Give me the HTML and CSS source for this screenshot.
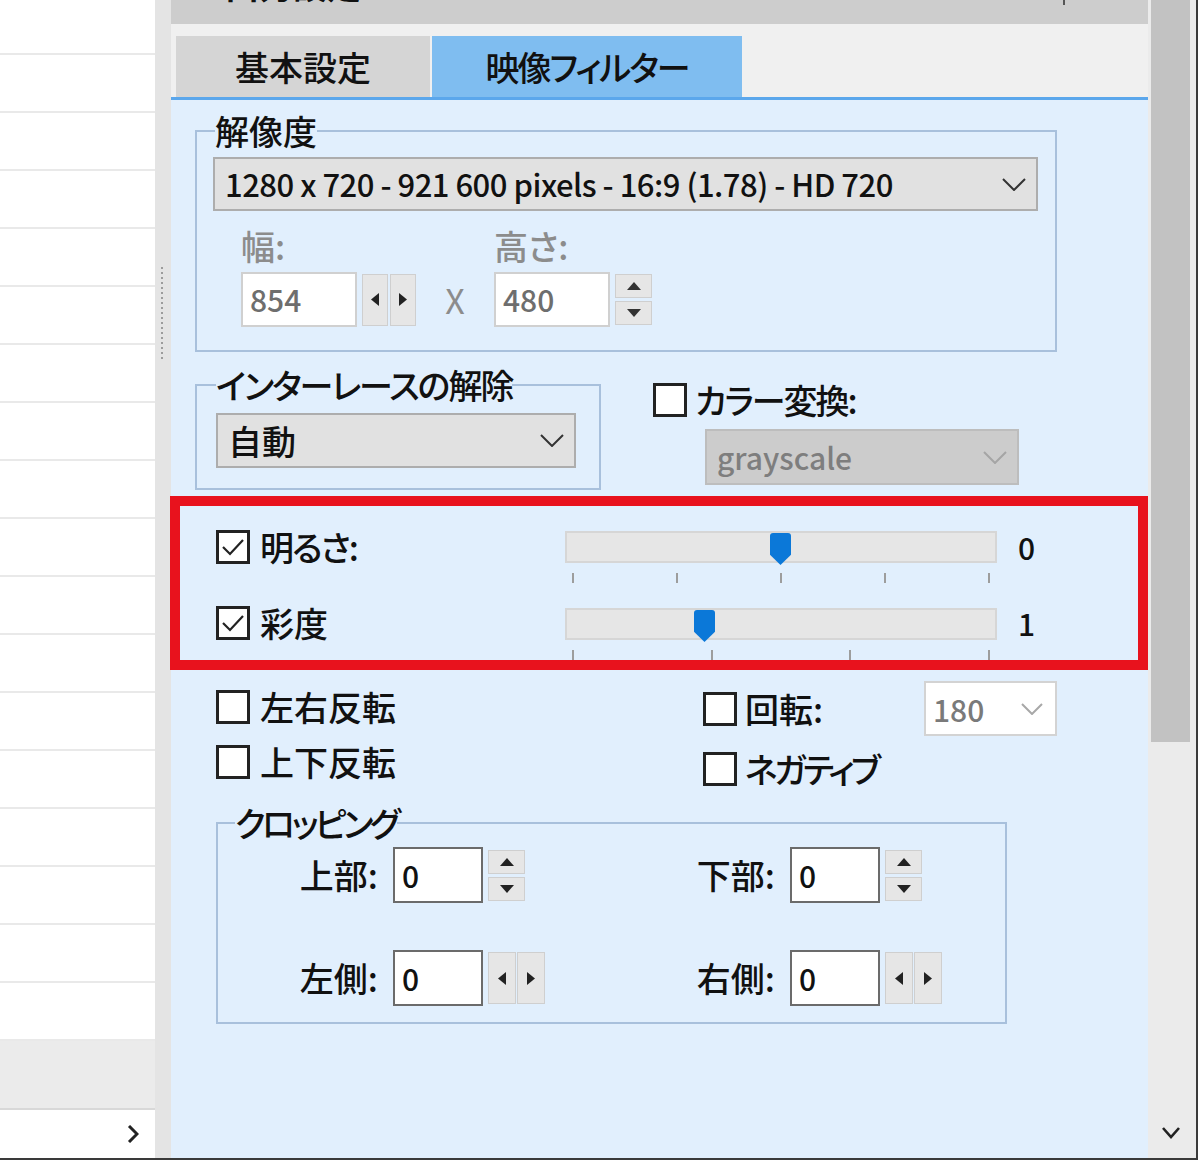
FILE: index.html
```html
<!DOCTYPE html>
<html lang="ja">
<head>
<meta charset="utf-8">
<title>映像フィルター</title>
<link rel="stylesheet" href="styles.css">
</head>
<body>
<div class="window">
  <aside class="list">
    <div class="list-row first"></div>
    <div class="list-row"></div><div class="list-row"></div><div class="list-row"></div>
    <div class="list-row"></div><div class="list-row"></div><div class="list-row"></div>
    <div class="list-row"></div><div class="list-row"></div><div class="list-row"></div>
    <div class="list-row"></div><div class="list-row"></div><div class="list-row"></div>
    <div class="list-row"></div><div class="list-row"></div><div class="list-row"></div>
    <div class="list-row"></div><div class="list-row"></div>
    <div class="list-gray"></div>
    <div class="list-foot">
      <svg width="12" height="18" viewBox="0 0 12 18"><polyline points="2,1 10,9 2,17" fill="none" stroke="#222" stroke-width="3"/></svg>
    </div>
  </aside>

  <div class="splitter"><div class="grip"></div></div>

  <main class="panel">
    <div class="panel-title"><span class="title-text">出力設定</span><span class="collapse"></span></div>
    <div class="tabs">
      <div class="tab basic">基本設定</div>
      <div class="tab video"><span class="kana">映像フィルター</span></div>
    </div>

    <div class="content">
      <fieldset class="group res">
        <legend>解像度</legend>
        <div class="select res-select">
          <span class="latin wide">1280 x 720 - 921 600 pixels - 16:9 (1.78) - HD 720</span>
          <svg class="chev" width="24" height="13" viewBox="0 0 24 13"><polyline points="1,1 12,12 23,1" fill="none" stroke="#333" stroke-width="2"/></svg>
        </div>
        <div class="dims">
          <div class="dim">
            <div class="dim-label">幅:</div>
            <div class="dim-inputs">
              <div class="field light latin">854</div>
              <div class="hspin">
                <div class="sbtn"><svg width="8" height="13" viewBox="0 0 8 13"><polygon points="8,0 8,13 0,6.5" fill="#222"/></svg></div>
                <div class="sbtn"><svg width="8" height="13" viewBox="0 0 8 13"><polygon points="0,0 0,13 8,6.5" fill="#222"/></svg></div>
              </div>
            </div>
          </div>
          <div class="times">X</div>
          <div class="dim">
            <div class="dim-label">高さ:</div>
            <div class="dim-inputs">
              <div class="field light latin">480</div>
              <div class="vspin">
                <div class="sbtn"><svg width="14" height="8" viewBox="0 0 14 8"><polygon points="0,8 14,8 7,0" fill="#333"/></svg></div>
                <div class="sbtn"><svg width="14" height="8" viewBox="0 0 14 8"><polygon points="0,0 14,0 7,8" fill="#333"/></svg></div>
              </div>
            </div>
          </div>
        </div>
      </fieldset>

      <div class="row2">
        <fieldset class="group deint">
          <legend class="kana">インターレースの解除</legend>
          <div class="select deint-select">
            <span>自動</span>
            <svg class="chev" width="24" height="13" viewBox="0 0 24 13"><polyline points="1,1 12,12 23,1" fill="none" stroke="#333" stroke-width="2"/></svg>
          </div>
        </fieldset>
        <div class="color">
          <div class="check"><span class="box"></span><span class="kana">カラー変換:</span></div>
          <div class="select disabled">
            <span class="latin">grayscale</span>
            <svg class="chev" width="24" height="13" viewBox="0 0 24 13"><polyline points="1,1 12,12 23,1" fill="none" stroke="#a5a5a5" stroke-width="2"/></svg>
          </div>
        </div>
      </div>

      <div class="redbox">
        <div class="srow">
          <div class="check"><span class="box"><svg width="28" height="28" viewBox="0 0 28 28"><polyline points="4,14 11,21 24,7" fill="none" stroke="#222" stroke-width="2.2"/></svg></span><span class="kana">明るさ:</span></div>
          <div class="slider">
            <div class="track"><span class="thumb" style="left:203px"></span></div>
            <div class="ticks"><i></i><i></i><i></i><i></i><i></i></div>
          </div>
          <div class="val latin">0</div>
        </div>
        <div class="srow second">
          <div class="check"><span class="box"><svg width="28" height="28" viewBox="0 0 28 28"><polyline points="4,14 11,21 24,7" fill="none" stroke="#222" stroke-width="2.2"/></svg></span><span>彩度</span></div>
          <div class="slider">
            <div class="track"><span class="thumb" style="left:127px"></span></div>
            <div class="ticks"><i></i><i></i><i></i><i></i></div>
          </div>
          <div class="val latin">1</div>
        </div>
      </div>

      <div class="opts">
        <div class="opts-left">
          <div class="check"><span class="box"></span><span>左右反転</span></div>
          <div class="check"><span class="box"></span><span>上下反転</span></div>
        </div>
        <div class="opts-right">
          <div class="rot">
            <div class="check"><span class="box"></span><span>回転:</span></div>
            <div class="select white">
              <span class="latin">180</span>
              <svg class="chev" width="22" height="12" viewBox="0 0 22 12"><polyline points="1,1 11,11 21,1" fill="none" stroke="#a8a8a8" stroke-width="2"/></svg>
            </div>
          </div>
          <div class="check"><span class="box"></span><span class="kana tight">ネガティブ</span></div>
        </div>
      </div>

      <fieldset class="group crop">
        <legend class="kana tight">クロッピング</legend>
        <div class="crop-grid">
          <div class="cell">
            <div class="cell-label">上部:</div>
            <div class="field dark latin">0</div>
            <div class="vspin">
              <div class="sbtn"><svg width="14" height="8" viewBox="0 0 14 8"><polygon points="0,8 14,8 7,0" fill="#222"/></svg></div>
              <div class="sbtn"><svg width="14" height="8" viewBox="0 0 14 8"><polygon points="0,0 14,0 7,8" fill="#222"/></svg></div>
            </div>
          </div>
          <div class="cell">
            <div class="cell-label">下部:</div>
            <div class="field dark latin">0</div>
            <div class="vspin">
              <div class="sbtn"><svg width="14" height="8" viewBox="0 0 14 8"><polygon points="0,8 14,8 7,0" fill="#222"/></svg></div>
              <div class="sbtn"><svg width="14" height="8" viewBox="0 0 14 8"><polygon points="0,0 14,0 7,8" fill="#222"/></svg></div>
            </div>
          </div>
          <div class="cell">
            <div class="cell-label">左側:</div>
            <div class="field dark latin">0</div>
            <div class="hspin wide">
              <div class="sbtn"><svg width="8" height="13" viewBox="0 0 8 13"><polygon points="8,0 8,13 0,6.5" fill="#222"/></svg></div>
              <div class="sbtn"><svg width="8" height="13" viewBox="0 0 8 13"><polygon points="0,0 0,13 8,6.5" fill="#222"/></svg></div>
            </div>
          </div>
          <div class="cell">
            <div class="cell-label">右側:</div>
            <div class="field dark latin">0</div>
            <div class="hspin wide">
              <div class="sbtn"><svg width="8" height="13" viewBox="0 0 8 13"><polygon points="8,0 8,13 0,6.5" fill="#222"/></svg></div>
              <div class="sbtn"><svg width="8" height="13" viewBox="0 0 8 13"><polygon points="0,0 0,13 8,6.5" fill="#222"/></svg></div>
            </div>
          </div>
        </div>
      </fieldset>
    </div>
  </main>

  <div class="vscroll">
    <div class="vthumb"></div>
    <div class="varrow">
      <svg width="18" height="12" viewBox="0 0 18 12"><polyline points="1,1 9,10 17,1" fill="none" stroke="#222" stroke-width="2.6"/></svg>
    </div>
  </div>
</div>
</body>
</html>
```

FILE: styles.css
```css
* { box-sizing: border-box; }

html, body {
  margin: 0;
  padding: 0;
  background: #ffffff;
}

body {
  font-family: "Noto Sans CJK JP", "Noto Sans", sans-serif;
  font-size: 34px;
  font-weight: 500;
  line-height: 40px;
  color: #111111;
  font-feature-settings: "palt";
}

.latin { font-size: 30px; }
.latin.wide { font-size: 31px; letter-spacing: -0.5px; }
.kana { letter-spacing: -2px; }
.kana.tight { letter-spacing: -3.5px; }

.window {
  display: flex;
  width: 1198px;
  height: 1160px;
  border-right: 2px solid #3a3a3a;
  border-bottom: 2px solid #3a3a3a;
  overflow: hidden;
}

/* left list */
.list {
  width: 155px;
  flex: none;
  display: flex;
  flex-direction: column;
  background: #ffffff;
}
.list-row {
  flex: none;
  height: 58px;
  border-bottom: 2px solid #e9e9e9;
}
.list-row.first { height: 55px; }
.list-gray {
  flex: none;
  height: 69px;
  background: #ebebeb;
  border-bottom: 2px solid #d8d8d8;
}
.list-foot {
  flex: 1;
  display: flex;
  align-items: center;
  justify-content: flex-end;
  padding-right: 16px;
}

/* splitter */
.splitter {
  width: 16px;
  flex: none;
  background: #e4e4e4;
  padding-top: 267px;
  padding-left: 6px;
}
.grip {
  width: 2px;
  height: 94px;
  background: repeating-linear-gradient(to bottom, #9c9c9c 0 2px, transparent 2px 5px);
}

/* main panel */
.panel {
  width: 977px;
  flex: none;
  display: flex;
  flex-direction: column;
}
.panel-title {
  height: 24px;
  background: #cdcdcd;
  overflow: hidden;
  display: flex;
  align-items: flex-start;
  padding-left: 54px;
}
.title-text {
  display: block;
  margin-top: -32px;
  line-height: 34px;
  font-weight: 700;
}
.collapse {
  margin-left: auto;
  margin-right: 83px;
  width: 2px;
  height: 5px;
  background: #555;
}

.tabs {
  height: 76px;
  background: #f0f0f0;
  border-bottom: 3px solid #5ba7ec;
  display: flex;
  align-items: flex-end;
  padding-left: 5px;
  gap: 2px;
}
.tab {
  height: 61px;
  line-height: 61px;
  text-align: center;
}
.tab.basic {
  width: 254px;
  background: #d5d5d5;
}
.tab.video {
  width: 310px;
  background: #7fbdf0;
}

.content {
  flex: 1;
  background: #e1effd;
  padding-left: 24px;
  display: flex;
  flex-direction: column;
  align-items: flex-start;
}

/* group boxes */
.group {
  margin: 0;
  min-width: 0;
  border: 2px solid #a8c0dc;
}
.group legend {
  padding: 0;
  line-height: 40px;
}

.res {
  margin-top: 11px;
  width: 862px;
  padding: 6px 17px 23px 16px;
}
.res legend { margin-left: 2px; }

.select {
  display: flex;
  align-items: center;
  justify-content: space-between;
  background: #e1e1e1;
  border: 2px solid #adadad;
  padding: 0 10px 0 10px;
}
.res-select {
  width: 825px;
  height: 54px;
}

.dims {
  display: flex;
  align-items: flex-end;
  margin-top: 15px;
  padding-left: 28px;
}
.dim {
  display: flex;
  flex-direction: column;
}
.dim-label {
  color: #8c8c8c;
  line-height: 40px;
}
.dim-inputs {
  display: flex;
  align-items: center;
  margin-top: 6px;
}
.field {
  background: #ffffff;
  padding-left: 7px;
}
.field.light {
  width: 116px;
  height: 55px;
  line-height: 51px;
  border: 2px solid #d0d0d0;
  color: #6e6e6e;
}
.times {
  width: 78px;
  height: 55px;
  line-height: 55px;
  text-align: center;
  color: #8c8c8c;
  font-weight: 400;
}

.sbtn {
  background: #e6e6e6;
  border: 1px solid #cfcfcf;
  display: flex;
  align-items: center;
  justify-content: center;
}
.hspin {
  display: flex;
  gap: 2px;
  margin-left: 5px;
}
.hspin .sbtn {
  width: 26px;
  height: 52px;
}
.hspin.wide { gap: 1px; }
.hspin.wide .sbtn {
  width: 28px;
  height: 52px;
}
.vspin {
  display: flex;
  flex-direction: column;
  gap: 3px;
  margin-left: 5px;
}
.vspin .sbtn {
  width: 37px;
  height: 24px;
}

/* row 2 */
.row2 {
  display: flex;
  margin-top: 13px;
}
.deint {
  width: 406px;
  padding: 8px 23px 20px 19px;
}
.deint-select {
  width: 360px;
  height: 55px;
}
.color {
  margin-left: 52px;
  padding-top: 15px;
}

.check {
  display: flex;
  align-items: center;
  gap: 8px;
  height: 40px;
}
.box {
  width: 34px;
  height: 34px;
  flex: none;
  border: 3px solid #222222;
  background: #ffffff;
  display: flex;
  align-items: center;
  justify-content: center;
}

.select.disabled {
  margin-top: 9px;
  margin-left: 52px;
  width: 314px;
  height: 56px;
  background: #cccccc;
  border-color: #bdbdbd;
  color: #7e7e7e;
}

/* red highlight */
.redbox {
  margin-top: 6px;
  margin-left: -25px;
  width: 978px;
  height: 174px;
  border: 10px solid #e8121d;
  padding: 24px 0 0 36px;
}
.srow {
  display: flex;
  align-items: flex-start;
}
.srow.second { margin-top: 23px; }
.srow .check {
  width: 349px;
  height: 34px;
  gap: 10px;
}
.slider { width: 432px; }
.track {
  position: relative;
  height: 32px;
  margin-top: 1px;
  background: #e6e6e6;
  border: 2px solid #d6d6d6;
}
.srow.second .track { margin-top: 2px; }
.thumb {
  position: absolute;
  top: 0;
  width: 21px;
  height: 32px;
  background: #0b78d8;
  border-radius: 3px 3px 0 0;
  clip-path: polygon(0 0, 100% 0, 100% 68%, 50% 100%, 0 68%);
}
.ticks {
  display: flex;
  justify-content: space-between;
  padding: 0 7px;
  margin-top: 10px;
  height: 10px;
}
.ticks i {
  width: 2px;
  height: 10px;
  background: #9d9d9d;
}
.val {
  margin-left: 21px;
  margin-top: 1px;
  line-height: 32px;
}

/* options */
.opts {
  display: flex;
  margin-top: 11px;
  margin-left: 21px;
}
.opts .check {
  height: 44px;
  gap: 10px;
}
.opts-left {
  width: 487px;
  padding-top: 4px;
  display: flex;
  flex-direction: column;
  gap: 11px;
}
.opts-right {
  display: flex;
  flex-direction: column;
  gap: 11px;
}
.rot {
  display: flex;
  align-items: center;
  height: 55px;
}
.rot .check {
  width: 221px;
  gap: 8px;
}
.opts-right > .check { gap: 8px; }
.select.white {
  width: 133px;
  height: 55px;
  background: #ffffff;
  border: 2px solid #d3d3d3;
  color: #7a7a7a;
  padding: 0 12px 0 7px;
}

/* cropping */
.crop {
  margin-top: 12px;
  margin-left: 21px;
  width: 791px;
  padding: 4px 0 16px 17px;
}
.crop-grid {
  display: grid;
  grid-template-columns: 397px 1fr;
  row-gap: 47px;
}
.cell {
  display: flex;
  align-items: center;
}
.cell-label {
  width: 143px;
  text-align: right;
  margin-right: 15px;
}
.field.dark {
  width: 90px;
  height: 56px;
  line-height: 52px;
  border: 2px solid #6b6b6b;
  color: #111111;
}

/* scrollbar */
.vscroll {
  width: 48px;
  flex: none;
  background: #ebebeb;
  display: flex;
  flex-direction: column;
  padding: 0 6px 0 3px;
}
.vthumb {
  height: 742px;
  background: #c2c2c2;
}
.varrow {
  margin-top: auto;
  height: 50px;
  display: flex;
  align-items: center;
  justify-content: center;
}
```
